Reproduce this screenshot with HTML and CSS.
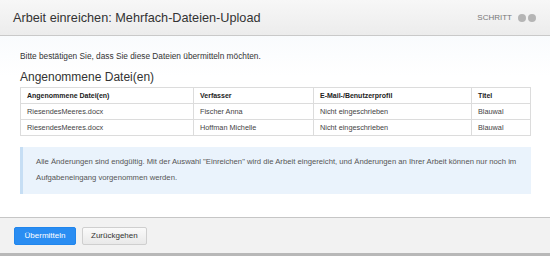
FILE: index.html
```html
<!DOCTYPE html>
<html lang="de">
<head>
    <meta charset="UTF-8">
    <title>Arbeit einreichen</title>
    <link rel="stylesheet" href="styles.css">
</head>
<body>
    <div class="dialog">
        <header class="dialog-header">
            <h1>Arbeit einreichen: Mehrfach-Dateien-Upload</h1>
            <div class="steps">
                <span>SCHRITT</span>
                <i class="dot"></i>
                <i class="dot"></i>
            </div>
        </header>

        <main class="dialog-body">
            <p class="intro">Bitte bestätigen Sie, dass Sie diese Dateien übermitteln möchten.</p>
            <h2>Angenommene Datei(en)</h2>
            <table class="files">
                <thead>
                    <tr>
                        <th class="col-file">Angenommene Datei(en)</th>
                        <th class="col-author">Verfasser</th>
                        <th class="col-mail">E-Mail-/Benutzerprofil</th>
                        <th>Titel</th>
                    </tr>
                </thead>
                <tbody>
                    <tr>
                        <td>RiesendesMeeres.docx</td>
                        <td>Fischer Anna</td>
                        <td>Nicht eingeschrieben</td>
                        <td>Blauwal</td>
                    </tr>
                    <tr>
                        <td>RiesendesMeeres.docx</td>
                        <td>Hoffman Michelle</td>
                        <td>Nicht eingeschrieben</td>
                        <td>Blauwal</td>
                    </tr>
                </tbody>
            </table>

            <div class="notice">
                Alle Änderungen sind endgültig. Mit der Auswahl "Einreichen" wird die Arbeit eingereicht, und Änderungen an Ihrer Arbeit können nur noch im Aufgabeneingang vorgenommen werden.
            </div>
        </main>

        <footer class="dialog-footer">
            <button class="btn btn-primary">Übermitteln</button>
            <button class="btn">Zurückgehen</button>
        </footer>
    </div>
</body>
</html>
```

FILE: styles.css
```css
* {
    margin: 0;
    padding: 0;
    box-sizing: border-box;
}

body {
    font-family: "Liberation Sans", Arial, sans-serif;
    color: #333;
    background: #fff;
}

.dialog {
    width: 550px;
    height: 256px;
    display: flex;
    flex-direction: column;
}

/* Kopfzeile */
.dialog-header {
    height: 36px;
    display: flex;
    align-items: center;
    justify-content: space-between;
    padding: 0 14px 0 13px;
    background: linear-gradient(#f7f7f7, #ececec);
    border-bottom: 1px solid #c9c9c9;
}

.dialog-header h1 {
    font-size: 12.7px;
    font-weight: normal;
    color: #333;
}

.steps {
    display: flex;
    align-items: center;
    font-size: 8px;
    color: #777;
}

.steps span {
    margin-right: 4px;
}

.dot {
    width: 8px;
    height: 8px;
    border-radius: 50%;
    background: #b5b5b5;
    margin-left: 2px;
}

/* Inhalt */
.dialog-body {
    flex: 1;
    padding: 15px 19px 0 20px;
    background: linear-gradient(#f9fbfd, #fff 40px);
}

.intro {
    font-size: 8.3px;
    color: #333;
}

.dialog-body h2 {
    font-size: 12px;
    font-weight: normal;
    color: #333;
    margin-top: 9px;
    margin-bottom: 3px;
}

.files {
    width: 100%;
    border-collapse: collapse;
    font-size: 7.3px;
    background: #fff;
}

.files th,
.files td {
    border: 1px solid #dcdcdc;
    height: 16px;
    padding: 0 6px;
    text-align: left;
    color: #444;
}

.files th {
    font-size: 7px;
    font-weight: bold;
    color: #222;
}

.col-file {
    width: 173px;
}

.col-author {
    width: 120px;
}

.col-mail {
    width: 158px;
}

.notice {
    margin-top: 11px;
    padding: 7px 13px 8px 13px;
    background: #eaf3fc;
    border-left: 3px solid #c6def4;
    font-size: 7.7px;
    line-height: 16px;
    color: #555;
}

/* Fusszeile */
.dialog-footer {
    height: 39px;
    display: flex;
    align-items: center;
    gap: 6px;
    padding: 0 14px;
    background: #f2f2f2;
    border-top: 1px solid #c6c6c6;
    border-bottom: 3px solid #b8b8b8;
}

.btn {
    height: 18px;
    padding: 0 8px;
    font-family: "Liberation Sans", Arial, sans-serif;
    font-size: 8px;
    color: #333;
    background: linear-gradient(#fafafa, #e9e9e9);
    border: 1px solid #cfcfcf;
    border-radius: 2px;
}

.btn-primary {
    width: 62px;
    color: #fff;
    background: #2a8df2;
    border-color: #2186ec;
}
```
